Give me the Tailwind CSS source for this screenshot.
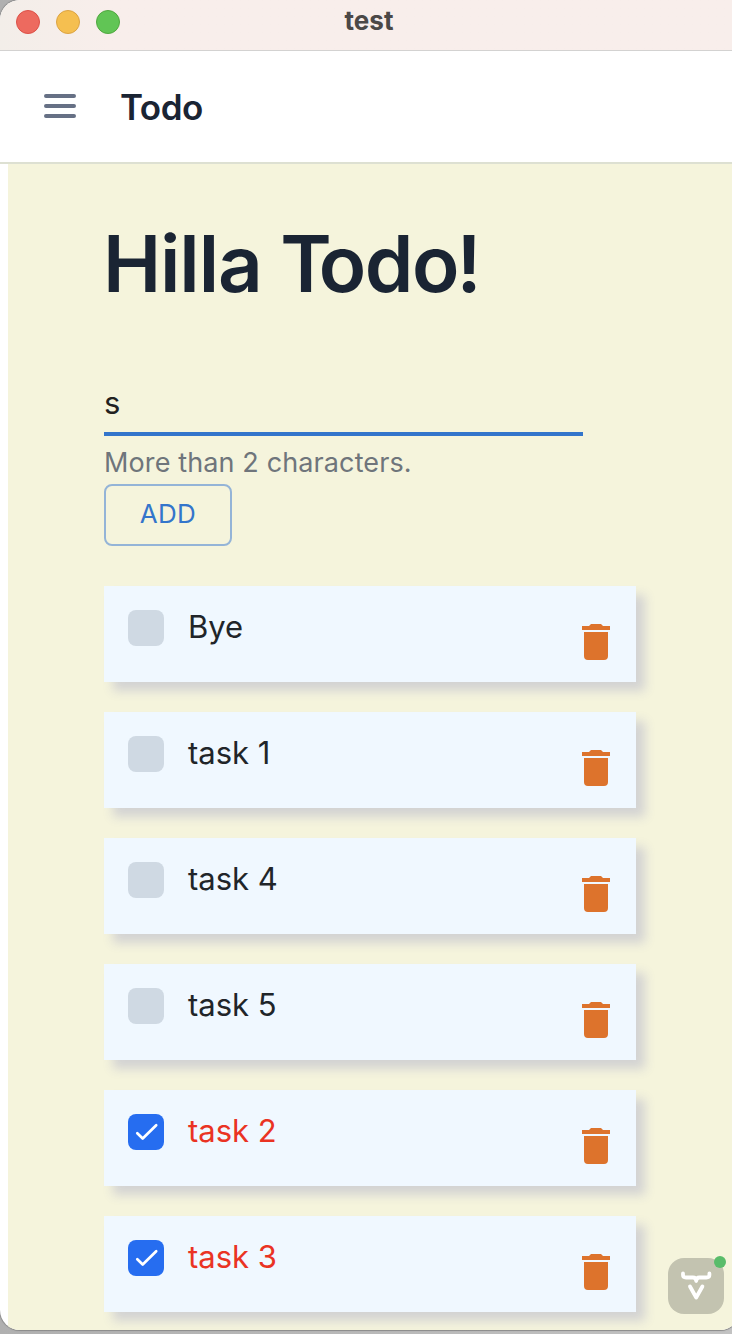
<!DOCTYPE html>
<html lang="en">
<head>
<meta charset="utf-8">
<title>Todo</title>
<script src="https://cdn.jsdelivr.net/npm/@tailwindcss/browser@4"></script>
</head>
<body class="bg-[#b5b5b5] font-['Inter',sans-serif]">
<svg class="hidden">
  <symbol id="trash" viewBox="0 0 28 36"><path fill="#dd732c" d="M2 8h24v24a4 4 0 0 1-4 4H6a4 4 0 0 1-4-4zM0 2h7l2-2h10l2 2h7v4H0z"/></symbol>
  <symbol id="check" viewBox="0 0 36 36"><path d="M9.3 19.3l5.4 5.2L28.2 11.3" fill="none" stroke="#fff" stroke-width="2.7" stroke-linecap="round" stroke-linejoin="round"/></symbol>
</svg>
<div class="relative flex h-[1334px] w-[732px] flex-col overflow-hidden bg-linear-to-r from-[#b0b0b0] to-[#c2c2c2]">
  <div class="flex h-[1330px] w-[740px] flex-col overflow-hidden rounded-[20px] rounded-tr-none bg-white shadow-[0_0_1px_1px_#8a8a8a]">
    <div class="grid h-[51px] w-[732px] shrink-0 grid-cols-[1fr_auto_1fr] items-center border-b border-[#d3d2d1] bg-linear-to-r from-[#f3eee9] to-[#f8eeeb] to-15% px-4 pb-[7px]">
      <div class="flex gap-4">
        <span class="size-6 rounded-full border border-[#dc5148] bg-[#ed6a5f]"></span>
        <span class="size-6 rounded-full border border-[#dba343] bg-[#f5bf50]"></span>
        <span class="size-6 rounded-full border border-[#50a73f] bg-[#61c555]"></span>
      </div>
      <div class="-mt-0.5 translate-x-[3px] text-[26px] leading-8 font-bold tracking-[0.1px] text-[#4b4847]">test</div>
    </div>
    <header class="flex h-[113px] shrink-0 items-center border-b-2 border-[#dde0d2] pb-0.5 pl-11">
      <svg class="h-6 w-8" viewBox="0 0 32 24"><path d="M2 2h28M2 12h28M2 22h28" stroke="#667085" stroke-width="4" stroke-linecap="round"/></svg>
      <h2 class="ml-11 pt-0.5 text-[35px] leading-[44px] font-semibold tracking-[-0.5px] text-[#1a2433]">Todo</h2>
    </header>
    <main class="ml-2 flex grow flex-col items-start bg-[#f5f4dc] pl-24">
      <h1 class="mt-[50px] -ml-px h-[100px] text-[78px] leading-[100px] font-semibold tracking-[-1.1px] whitespace-nowrap text-[#1a2433]">Hilla <span class="tracking-[-13px]">T</span><span class="tracking-[-1.5px]">od</span><span class="tracking-[-2.8px]">o!</span></h1>
      <div class="mt-[62px] h-[60px] w-[479px] border-b-4 border-[#3375cb] pt-[5px] text-[31px] leading-[44px] text-[#212121]">s</div>
      <div class="h-[48px] pt-[7px] text-[27px] leading-[40px] tracking-[0.12px] whitespace-nowrap text-[#6f757b]">More than 2 characters.</div>
      <button class="flex h-[62px] w-32 items-center justify-center rounded-lg border-2 border-[#94b4d7] pb-1 text-[26px] tracking-[0.3px] text-[#3375cb]">ADD</button>
      <ul class="mt-10 flex w-[532px] flex-col gap-[30px] text-[31px] leading-[44px] text-[#212529]">
        <li class="flex h-24 items-start bg-[#f0f8ff] pl-6 shadow-[9px_9px_10px_#d3d3d3]"><span class="mt-6 size-9 rounded-lg bg-[#cfd9e3]"></span><span class="mt-[19px] ml-6 grow">Bye</span><svg class="mt-[38px] mr-[26px] h-9 w-7"><use href="#trash"/></svg></li>
        <li class="flex h-24 items-start bg-[#f0f8ff] pl-6 shadow-[9px_9px_10px_#d3d3d3]"><span class="mt-6 size-9 rounded-lg bg-[#cfd9e3]"></span><span class="mt-[19px] ml-6 grow">task 1</span><svg class="mt-[38px] mr-[26px] h-9 w-7"><use href="#trash"/></svg></li>
        <li class="flex h-24 items-start bg-[#f0f8ff] pl-6 shadow-[9px_9px_10px_#d3d3d3]"><span class="mt-6 size-9 rounded-lg bg-[#cfd9e3]"></span><span class="mt-[19px] ml-6 grow">task 4</span><svg class="mt-[38px] mr-[26px] h-9 w-7"><use href="#trash"/></svg></li>
        <li class="flex h-24 items-start bg-[#f0f8ff] pl-6 shadow-[9px_9px_10px_#d3d3d3]"><span class="mt-6 size-9 rounded-lg bg-[#cfd9e3]"></span><span class="mt-[19px] ml-6 grow">task 5</span><svg class="mt-[38px] mr-[26px] h-9 w-7"><use href="#trash"/></svg></li>
        <li class="flex h-24 items-start bg-[#f0f8ff] pl-6 shadow-[9px_9px_10px_#d3d3d3]"><svg class="mt-6 size-9 rounded-lg bg-[#266df0]"><use href="#check"/></svg><span class="mt-[19px] ml-6 grow text-[#ea3323]">task 2</span><svg class="mt-[38px] mr-[26px] h-9 w-7"><use href="#trash"/></svg></li>
        <li class="flex h-24 items-start bg-[#f0f8ff] pl-6 shadow-[9px_9px_10px_#d3d3d3]"><svg class="mt-6 size-9 rounded-lg bg-[#266df0]"><use href="#check"/></svg><span class="mt-[19px] ml-6 grow text-[#ea3323]">task 3</span><svg class="mt-[38px] mr-[26px] h-9 w-7"><use href="#trash"/></svg></li>
      </ul>
    </main>
  </div>
  <div class="absolute right-2 bottom-5 size-14 rounded-2xl bg-[#c3c3b0]">
    <svg class="size-14" viewBox="0 0 56 56" fill="none" stroke="#fff" stroke-width="3.8" stroke-linecap="round" stroke-linejoin="round"><path d="M15 15.5v1.5q0 2.5 3 2.5h7q3 0 3.2 3.5q.2-3.5 3.2-3.5h7q3 0 3-2.5v-1.5M22 28.5l6.2 11 6.2-11"/></svg>
    <span class="absolute -top-0.5 -right-0.5 size-3 rounded-full bg-[#59bc6a]"></span>
  </div>
</div>
</body>
</html>
